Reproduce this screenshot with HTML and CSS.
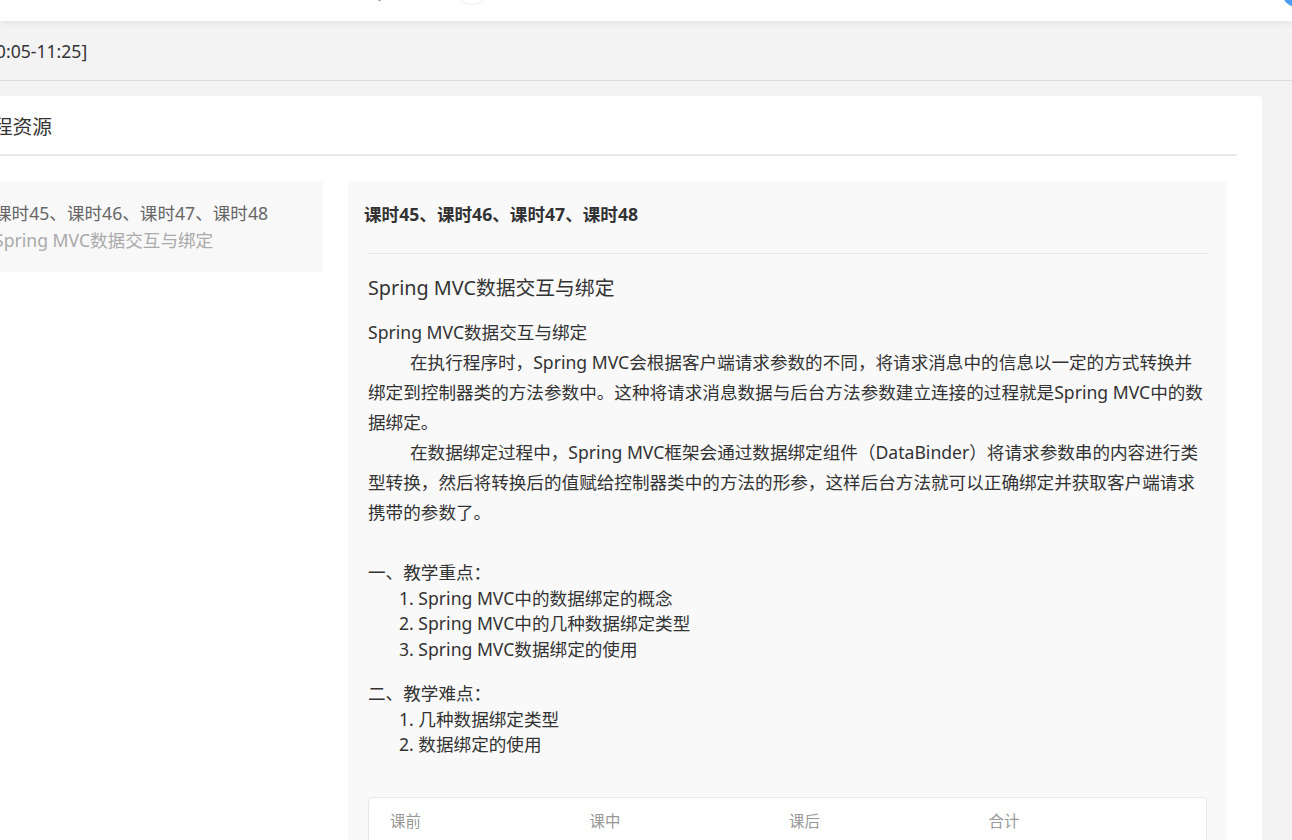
FILE: index.html
```html
<!DOCTYPE html>
<html lang="zh-CN">
<head>
<meta charset="utf-8">
<title>课程资源</title>
<link rel="stylesheet" href="styles.css">
</head>
<body>
<header class="topbar">
  <span class="top-nav">课</span>
  <span class="top-ring"></span>
  <span class="top-avatar"></span>
</header>
<div class="page">
  <div class="timebar">[10:05-11:25]</div>
  <section class="card">
    <div class="card-head">课程资源</div>
    <div class="card-body">
      <div class="lesson-list">
        <div class="lesson-item">
          <div class="lesson-name">课时45、课时46、课时47、课时48</div>
          <div class="lesson-sub">Spring MVC数据交互与绑定</div>
        </div>
      </div>
      <div class="panel">
        <div class="panel-title">课时45、课时46、课时47、课时48</div>
        <div class="panel-content">
          <div class="content-heading">Spring MVC数据交互与绑定</div>
          <div class="rich">
            <div>Spring MVC数据交互与绑定</div>
            <div class="para">在执行程序时，Spring MVC会根据客户端请求参数的不同，将请求消息中的信息以一定的方式转换并绑定到控制器类的方法参数中。这种将请求消息数据与后台方法参数建立连接的过程就是Spring MVC中的数据绑定。</div>
            <div class="para">在数据绑定过程中，Spring MVC框架会通过数据绑定组件（DataBinder）将请求参数串的内容进行类型转换，然后将转换后的值赋给控制器类中的方法的形参，这样后台方法就可以正确绑定并获取客户端请求携带的参数了。</div>
            <div class="blank"></div>
          </div>
          <div class="points">
            <div>一、教学重点：</div>
            <div class="point">1. Spring MVC中的数据绑定的概念</div>
            <div class="point">2. Spring MVC中的几种数据绑定类型</div>
            <div class="point">3. Spring MVC数据绑定的使用</div>
          </div>
          <div class="points">
            <div>二、教学难点：</div>
            <div class="point">1. 几种数据绑定类型</div>
            <div class="point">2. 数据绑定的使用</div>
          </div>
          <div class="stats">
            <div>课前</div>
            <div>课中</div>
            <div>课后</div>
            <div>合计</div>
          </div>
        </div>
      </div>
    </div>
  </section>
</div>
</body>
</html>
```
FILE: styles.css
```css
html, body {
  overflow: hidden;
}
body {
  margin: 0;
  background: #f3f3f3;
  font-family: "Noto Sans", "Noto Sans CJK SC", sans-serif;
  color: #333;
  font-size: 17.6px;
}

.topbar {
  position: relative;
  z-index: 1;
  height: 21px;
  background: #fff;
  box-shadow: 0 1px 8px rgba(0, 0, 0, 0.09);
  display: flex;
  align-items: flex-end;
  overflow: hidden;
}
.top-nav {
  margin-left: 368px;
  margin-bottom: 19px;
  line-height: 20px;
  font-size: 17.6px;
  color: #333;
  flex-shrink: 0;
}
.top-ring {
  width: 30px;
  height: 30px;
  border: 1px solid #eee;
  border-radius: 50%;
  margin-left: 70px;
  margin-bottom: 16px;
  flex-shrink: 0;
}
.top-avatar {
  width: 40px;
  height: 40px;
  border-radius: 50%;
  background: #4e9ef5;
  margin-left: auto;
  margin-right: -28px;
  margin-bottom: 13px;
  flex-shrink: 0;
}

.page {
  margin-left: -52px;
  width: 1344px;
}
.timebar {
  height: 59px;
  border-bottom: 1px solid #dcdcdc;
  display: flex;
  align-items: center;
  padding-left: 32px;
  font-size: 17.6px;
  color: #333;
}

.card {
  margin-top: 15px;
  margin-right: 30px;
  background: #fff;
  border-radius: 4px;
  padding: 0 25px;
  height: 760px;
}
.card-head {
  padding: 16px 0 12px;
  line-height: 30px;
  font-size: 19.8px;
  color: #333;
  border-bottom: 2px solid #e8e8e8;
}
.card-body {
  display: flex;
  gap: 25px;
  padding: 25px 10px 0 0;
}

.lesson-list {
  width: 350px;
  flex-shrink: 0;
}
.lesson-item {
  background: #f8f8f8;
  padding: 18.5px 0 18.5px 21px;
  line-height: 27px;
  font-size: 17.6px;
}
.lesson-name {
  color: #666;
}
.lesson-sub {
  color: #aaa;
}

.panel {
  flex: 1;
  background: #f9f9f9;
  border-radius: 4px;
  height: 700px;
}
.panel-title {
  padding: 18px 16px 24px;
  line-height: 30px;
  font-size: 17.6px;
  font-weight: bold;
  color: #333;
}
.panel-content {
  margin: 0 20px;
  border-top: 1px solid #e6e6e6;
  padding-top: 19px;
}
.content-heading {
  font-size: 19.8px;
  line-height: 30px;
}
.rich {
  margin-top: 14px;
  line-height: 30px;
}
.para {
  text-indent: 42px;
}
.blank {
  height: 30px;
}
.points {
  margin-top: 3px;
  line-height: 25.5px;
}
.points + .points {
  margin-top: 19px;
}
.point {
  padding-left: 31px;
}
.stats {
  margin-top: 39.5px;
  background: #fff;
  border: 1px solid #e8e8e8;
  border-radius: 4px;
  display: grid;
  grid-template-columns: repeat(4, 199.5px);
  padding: 13px 0 40px 21px;
  font-size: 15.4px;
  line-height: 22px;
  color: #999;
}
```
